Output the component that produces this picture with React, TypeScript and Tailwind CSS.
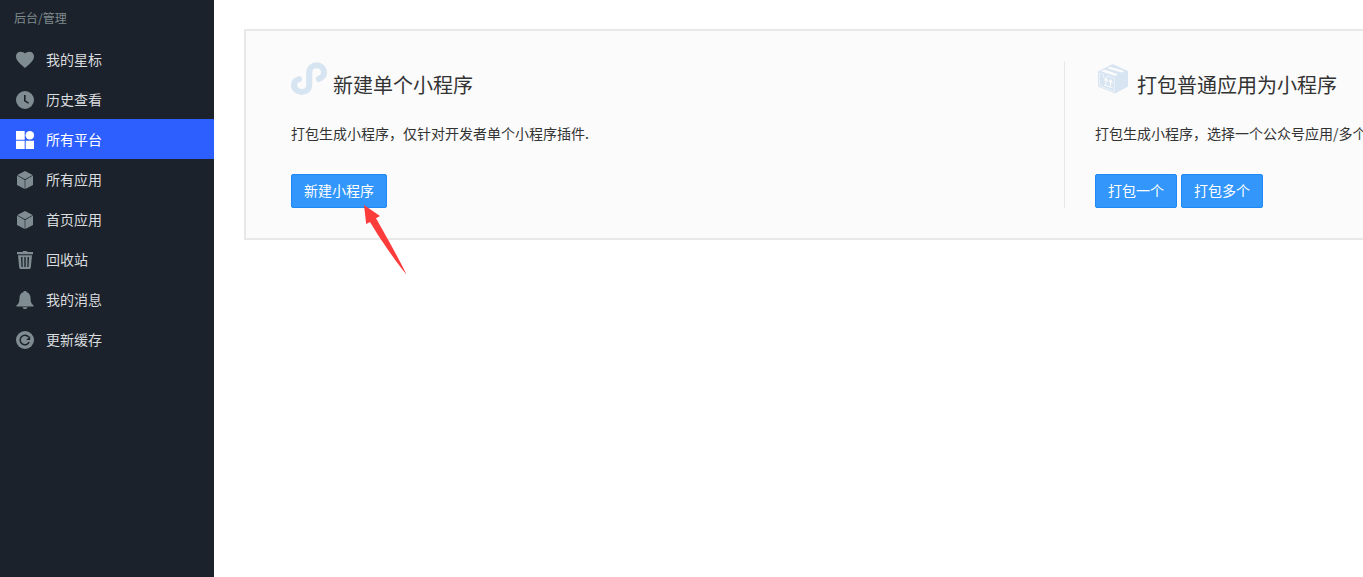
import type { ReactNode } from "react";

type IconProps = { children: ReactNode };

function NavIcon({ children }: IconProps) {
  return (
    <svg viewBox="0 0 18 18" className="size-[18px] shrink-0" fill="currentColor" aria-hidden="true">
      {children}
    </svg>
  );
}

const heart = <path d="M9 17C6.300 14.600 0 10.300 0 5.600 0 2.800 2 .8 4.600.8 6.600.8 8 1.500 9 2.600 10 1.500 11.400.8 13.400.8 16 .8 18 2.800 18 5.600 18 10.300 11.700 14.600 9 17Z" />;
const clock = (
  <path fillRule="evenodd" d="M9 0a9 9 0 1 0 0 18A9 9 0 0 0 9 0ZM8 4h1.600v5.400l3.400 2-.8 1.400L8 10.300Z" />
);
const blocks = (
  <>
    <path d="M0 0h8.700v8.700H0ZM0 9.700h8.700V18H0ZM9.700 9.700H18V18H9.700Z" />
    <circle cx="13.800" cy="4.300" r="4.300" />
  </>
);
const cube = <path d="M9 0 16.700 3.900 9 8.200 1.300 3.900ZM1 4.600 8.700 8.900V18L1 14.100ZM17 4.600V14.100L9.300 18V8.900Z" />;
const trash = (
  <path
    fillRule="evenodd"
    d="M6.500 1 7.200 0h3.600l.7 1H17v2.300H1V1ZM2 4.300h14L14.800 16.500c-.1.900-.7 1.500-1.600 1.500H4.800c-.9 0-1.500-.6-1.600-1.500ZM5 6l.5 10h1.200L6.400 6Zm3.300 0v10h1.400V6Zm3.300 0-.3 10h1.200L13 6Z"
  />
);
const bell = (
  <path d="M9 0c.9 0 1.600.5 1.800 1.200C13.300 2 14.500 4.200 14.500 7c0 4.200 1 6 3 7.300V15.500H.500V14.300C2.500 13 3.500 11.200 3.500 7c0-2.800 1.200-5 3.700-5.800C7.400.500 8.100 0 9 0ZM6.500 16.200h5C11.300 17.400 10.300 18 9 18s-2.300-.6-2.500-1.800Z" />
);
const refresh = (
  <>
    <circle cx="9" cy="9" r="9" />
    <path d="M13.200 11.200A4.800 4.800 0 1 1 12.700 6" fill="none" stroke="#1c222b" strokeWidth="1.500" />
    <path d="M14.200 5V9H10.200Z" fill="#1c222b" />
  </>
);

const navItems = [
  { label: "我的星标", icon: heart },
  { label: "历史查看", icon: clock },
  { label: "所有平台", icon: blocks, active: true },
  { label: "所有应用", icon: cube },
  { label: "首页应用", icon: cube },
  { label: "回收站", icon: trash },
  { label: "我的消息", icon: bell },
  { label: "更新缓存", icon: refresh },
];

function MiniProgramIcon() {
  return (
    <svg viewBox="0 0 36 34" className="h-[34px] w-9 shrink-0" fill="none" aria-hidden="true">
      <path
        d="M27.800 16.800C31 15.800 33 13.600 33 10.600 33 6.500 29.800 3.200 25.500 3.200 21.300 3.200 18.200 6.300 18.200 10.500V23C18.200 27 15 30 10.800 30 6.500 30 3 27 3 23.300 3 20.200 5 17.900 8 17"
        stroke="#d7e4f1"
        strokeWidth="6"
        strokeLinecap="round"
      />
    </svg>
  );
}

function PackageIcon() {
  return (
    <svg viewBox="0 0 30 30" className="size-[30px] shrink-0" aria-hidden="true">
      <path d="M0 7.500 14.500 0 30 7V22.500L17 29.500 0 22.500Z" fill="#d7e4f1" />
      <path d="M3 7.300 6.200 5.600 20 10.300 17.300 12ZM9 4.200 12 2.700 26.500 7 23.500 8.600Z" fill="#fbfbfb" />
      <path d="M1.500 9.200 5.500 10.500V13.500l3.500 1V11.700L16.300 14V27.800L1.500 21.600Z" fill="none" stroke="#edf3f9" strokeWidth="1" />
      <path d="M8 20.500v-6M12.500 22v-6M6.300 16.500 8 14.300l1.700 3M10.800 18 12.500 15.800l1.700 3M6 21l8.500 2.800" fill="none" stroke="#fbfbfb" strokeWidth="1.200" />
    </svg>
  );
}

function Action({ children }: { children: ReactNode }) {
  return (
    <button
      type="button"
      className="flex h-[34px] cursor-pointer items-start rounded-xs border border-[#1e88f7] bg-[#3296fa] px-3 pt-[5px] text-sm text-white"
    >
      {children}
    </button>
  );
}

function Pointer() {
  return (
    <svg
      viewBox="0 0 42 70"
      className="pointer-events-none absolute top-[31px] left-[73px] h-[70px] w-[42px]"
      aria-hidden="true"
    >
      <path d="M0 0 16 11 12 13.200C21 29 35 54 42.500 69.500 29 53 15 32 6 17L2.200 19Z" fill="#fc3b3b" />
    </svg>
  );
}

export default function App() {
  return (
    <div className="flex min-h-screen overflow-hidden bg-white font-['Noto_Sans_CJK_SC',sans-serif] text-sm text-[#333]">
      <aside className="w-[214px] shrink-0 bg-[#1c222b]">
        <p className="px-3.5 pt-2 pb-[11px] text-xs leading-5 text-[#7f8c8d]">后台/管理</p>
        <nav>
          {navItems.map(({ label, icon, active }) => (
            <a
              key={label}
              href="#"
              aria-current={active ? "page" : undefined}
              className={
                active
                  ? "flex h-10 items-start gap-3 bg-[#2d5fff] px-4 pt-3 text-white"
                  : "flex h-10 items-start gap-3 px-4 pt-3 text-[#7f8c92]"
              }
            >
              <NavIcon>{icon}</NavIcon>
              <span className={active ? "leading-[17px] text-white" : "leading-[17px] text-[#d9dcdf]"}>{label}</span>
            </a>
          ))}
        </nav>
      </aside>

      <main className="min-w-0 flex-1 overflow-hidden pt-[29px] pl-[30px]">
        <section className="grid min-w-[1642px] grid-cols-2 border-2 border-[#e8e8e8] bg-[#fbfbfb] py-[30px]">
          <div className="border-r border-[#e8e8e8] pl-[45px]">
            <div className="flex h-12 gap-1.5 pt-px">
              <MiniProgramIcon />
              <h2 className="text-xl leading-[46px]">新建单个小程序</h2>
            </div>
            <p className="mt-3.5 mb-[31px] leading-5">打包生成小程序，仅针对开发者单个小程序插件.</p>
            <div className="relative flex">
              <Action>新建小程序</Action>
              <Pointer />
            </div>
          </div>
          <div className="pl-[30px]">
            <div className="flex h-12 gap-[9px] pt-[3px] pl-[3px]">
              <PackageIcon />
              <h2 className="text-xl leading-[42px]">打包普通应用为小程序</h2>
            </div>
            <p className="mt-3.5 mb-[31px] leading-5">打包生成小程序，选择一个公众号应用/多个</p>
            <div className="flex gap-1">
              <Action>打包一个</Action>
              <Action>打包多个</Action>
            </div>
          </div>
        </section>
      </main>
    </div>
  );
}
